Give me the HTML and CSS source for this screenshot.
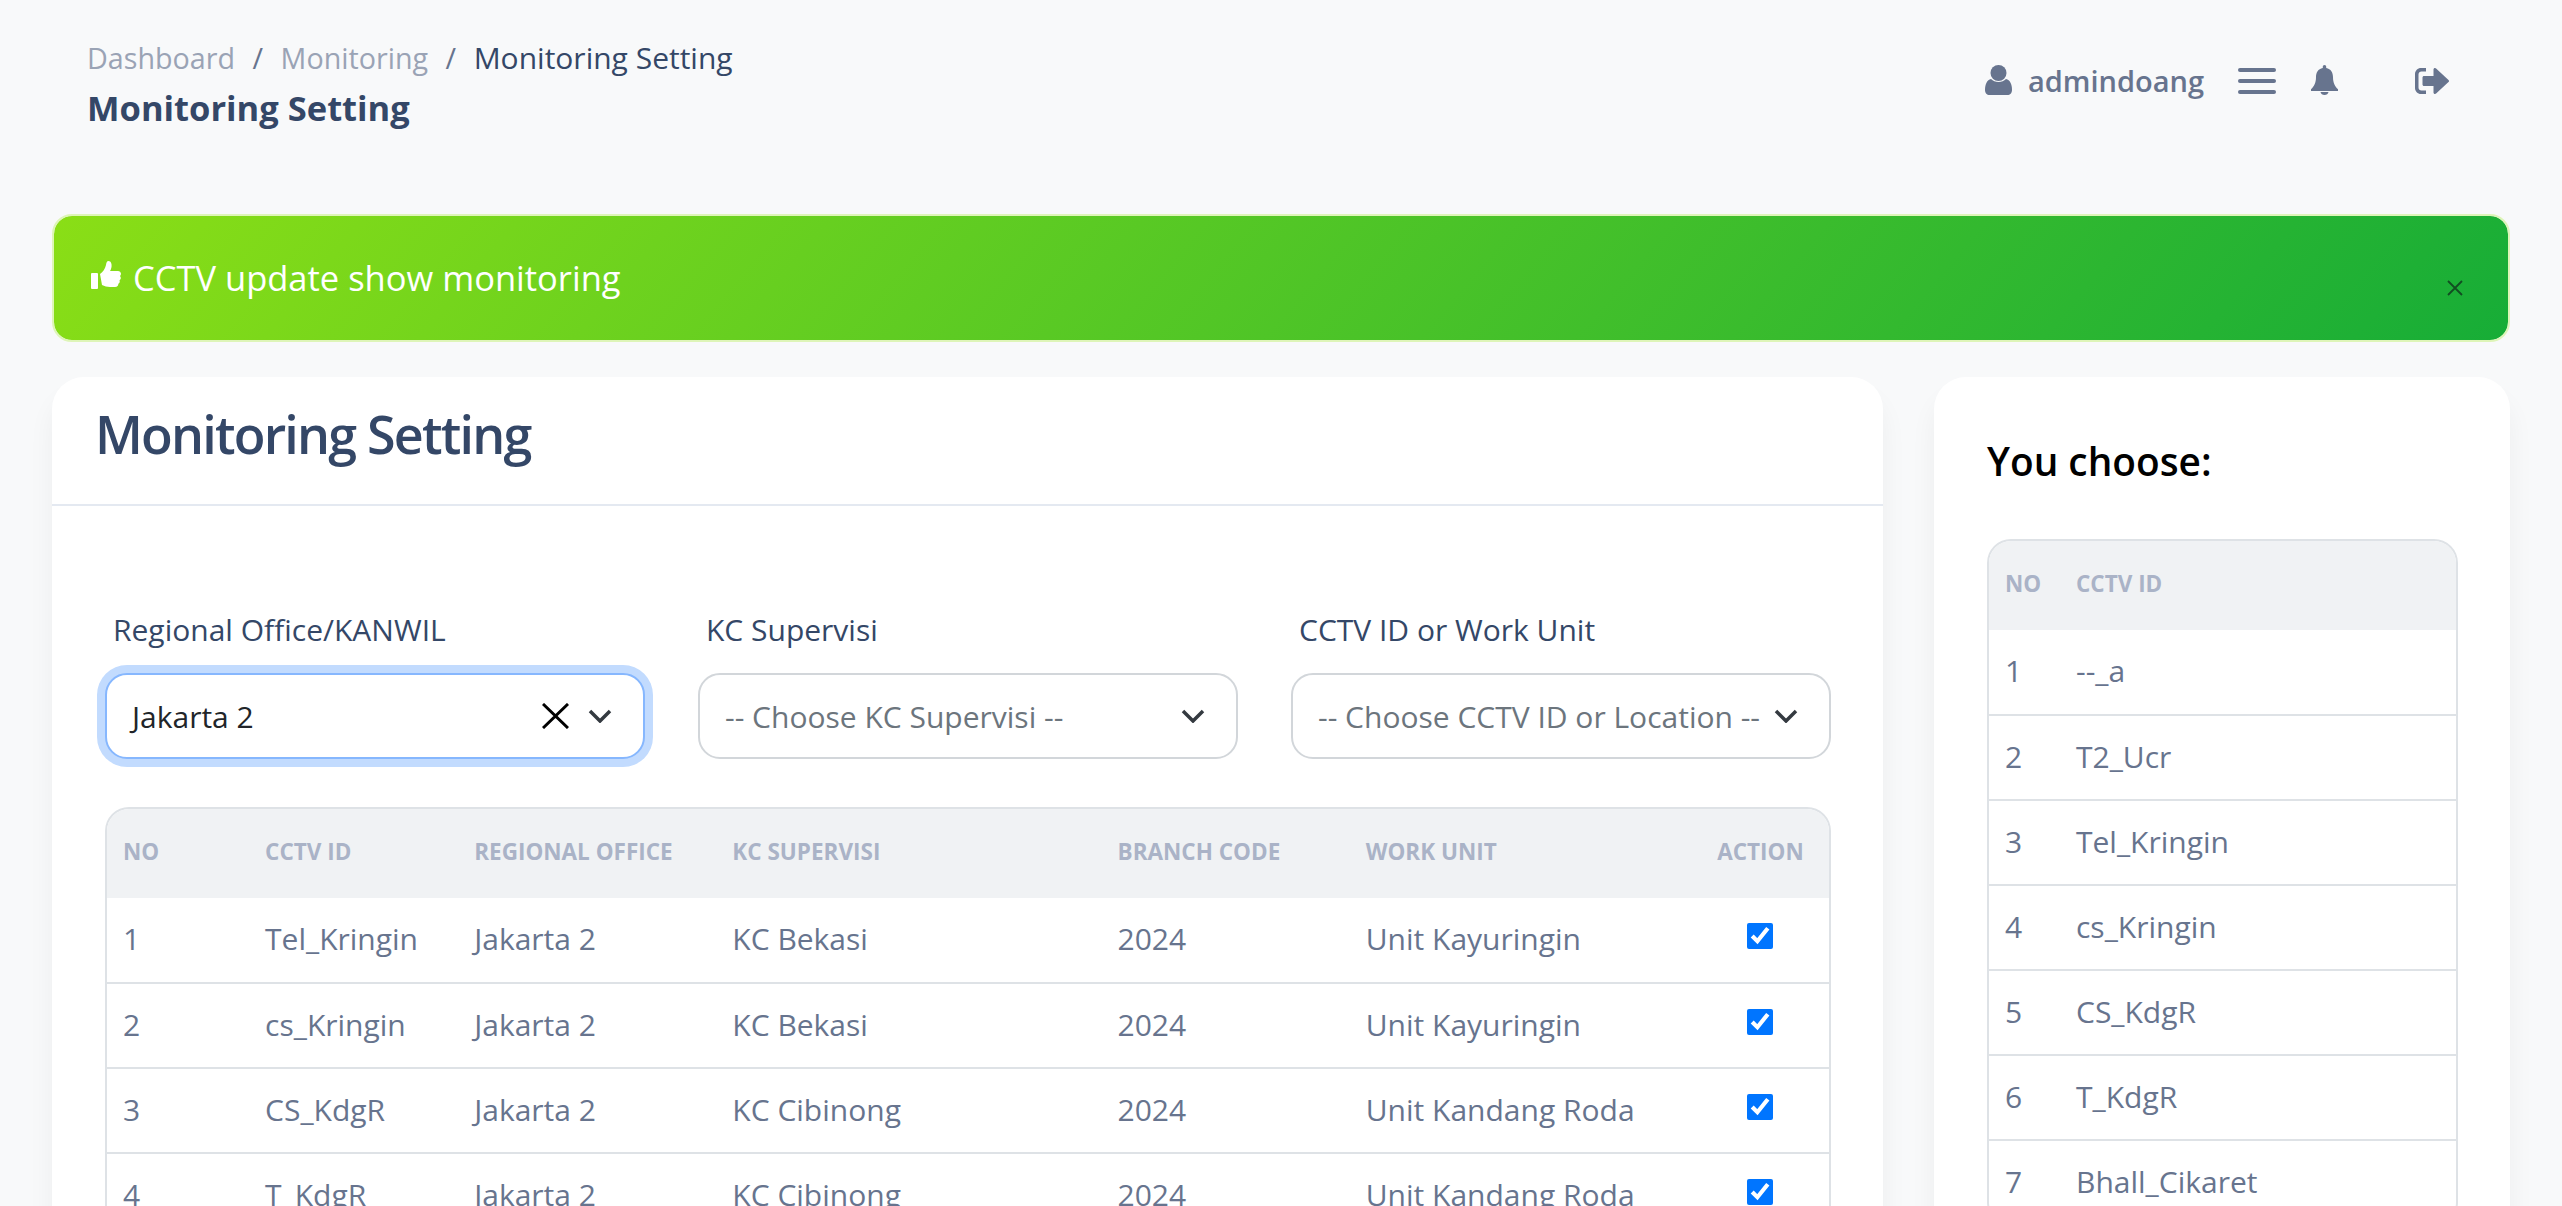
FILE: index.html
```html
<!DOCTYPE html>
<html lang="en">
<head>
<meta charset="utf-8">
<title>Monitoring Setting</title>
<link rel="stylesheet" href="styles.css">
</head>
<body>
<main class="page">
  <header class="topbar">
    <div class="crumbs-block">
      <nav class="crumbs">
        <span class="crumb-muted">Dashboard</span><span class="crumb-sep">/</span><span class="crumb-muted">Monitoring</span><span class="crumb-sep">/</span><span class="crumb-current">Monitoring Setting</span>
      </nav>
      <div class="page-title">Monitoring Setting</div>
    </div>
    <div class="top-actions">
      <svg class="ic ic-user" viewBox="0 0 27 30"><ellipse cx="13.5" cy="8" rx="8" ry="8"/><path d="M0 25c0-6 2-10 6-11 2 2 4.500 3 7.500 3s5.500-1 7.500-3c4 1 6 5 6 11 0 3-2 5-4.500 5h-18C2 30 0 28 0 25z"/></svg>
      <span class="user-name">admindoang</span>
      <svg class="ic ic-bars" viewBox="0 0 38 26"><rect width="38" height="4" rx="2"/><rect y="11" width="38" height="4" rx="2"/><rect y="22" width="38" height="4" rx="2"/></svg>
      <svg class="ic ic-bell" viewBox="0 0 27 30"><path d="M13.500 0c1 0 1.700.8 1.700 1.800v1.100C20 3.800 22 7.500 22 12c0 6 2 9.500 5 12.300V26H0v-1.700C3 21.500 5 18 5 12c0-4.500 2-8.200 6.800-9.100V1.800C11.800.8 12.500 0 13.500 0z"/><path d="M9.500 27h8c-.3 1.800-2 3-4 3s-3.700-1.200-4-3z"/></svg>
      <svg class="ic ic-out" viewBox="0 0 34 26"><path d="M11 0v3.500H6.500c-1.700 0-3 1.300-3 3v13c0 1.700 1.300 3 3 3H11V26H6C2.700 26 0 23.300 0 20V6c0-3.300 2.700-6 6-6z"/><path d="M20 0c.4 0 .8.200 1.100.5L33.500 11.900c.7.600.7 1.600 0 2.200L21.100 25.500c-.3.300-.7.500-1.100.500-.9 0-1.500-.7-1.500-1.500V18H9c-.8 0-1.500-.7-1.500-1.500v-7C7.500 8.700 8.200 8 9 8h9.500V1.500C18.500.7 19.100 0 20 0z"/></svg>
    </div>
  </header>

  <div class="alert">
    <svg class="ic-thumb" viewBox="0 0 30 29"><rect x="0" y="12" width="7" height="16" rx="1"/><path d="M9 13c3-2 5-5 6-9 .3-2 .8-4 2.500-4 2.500 0 3.500 3 3 6-.2 1.500-.8 3-1.500 4h8c1.500 0 3 1.200 3 2.800 0 1-.4 1.700-1 2.200.5.600.8 1.300.8 2 0 1-.5 1.800-1.300 2.300.2.500.3 1 .2 1.500-.1.900-.7 1.600-1.400 2 .2 2-1 3.200-3.300 3.200h-5c-3 0-5.500-1-8-2z"/></svg>
    <span class="alert-text">CCTV update show monitoring</span>
    <svg class="alert-close" viewBox="0 0 16 16"><path d="M1 1l14 14M15 1L1 15"/></svg>
  </div>

  <div class="columns">
    <section class="card">
      <div class="card-head"><h2 class="card-title">Monitoring Setting</h2></div>
      <div class="card-body">
        <div class="filters">
          <div class="field">
            <label class="field-label">Regional Office/KANWIL</label>
            <div class="select select-focus">
              <span class="select-value">Jakarta 2</span>
              <svg class="select-clear" viewBox="0 0 27 26"><path d="M1 1l25 24M26 1L1 25"/></svg>
              <svg class="chev" viewBox="0 0 24 14"><path d="M2 2l10 10L22 2"/></svg>
            </div>
          </div>
          <div class="field">
            <label class="field-label">KC Supervisi</label>
            <div class="select">
              <span class="select-placeholder">-- Choose KC Supervisi --</span>
              <svg class="chev" viewBox="0 0 24 14"><path d="M2 2l10 10L22 2"/></svg>
            </div>
          </div>
          <div class="field">
            <label class="field-label">CCTV ID or Work Unit</label>
            <div class="select">
              <span class="select-placeholder">-- Choose CCTV ID or Location --</span>
              <svg class="chev" viewBox="0 0 24 14"><path d="M2 2l10 10L22 2"/></svg>
            </div>
          </div>
        </div>
        <div class="table-wrap">
          <table class="grid-table main-table">
            <colgroup><col class="c1"><col class="c2"><col class="c3"><col class="c4"><col class="c5"><col class="c6"><col class="c7"></colgroup>
            <thead><tr><th>No</th><th>CCTV ID</th><th>Regional Office</th><th>KC Supervisi</th><th>Branch Code</th><th>Work Unit</th><th class="center">Action</th></tr></thead>
            <tbody>
              <tr><td>1</td><td>Tel_Kringin</td><td>Jakarta 2</td><td>KC Bekasi</td><td>2024</td><td>Unit Kayuringin</td><td class="center"><input class="check" type="checkbox" checked></td></tr>
              <tr><td>2</td><td>cs_Kringin</td><td>Jakarta 2</td><td>KC Bekasi</td><td>2024</td><td>Unit Kayuringin</td><td class="center"><input class="check" type="checkbox" checked></td></tr>
              <tr><td>3</td><td>CS_KdgR</td><td>Jakarta 2</td><td>KC Cibinong</td><td>2024</td><td>Unit Kandang Roda</td><td class="center"><input class="check" type="checkbox" checked></td></tr>
              <tr><td>4</td><td>T_KdgR</td><td>Jakarta 2</td><td>KC Cibinong</td><td>2024</td><td>Unit Kandang Roda</td><td class="center"><input class="check" type="checkbox" checked></td></tr>
            </tbody>
          </table>
        </div>
      </div>
    </section>

    <aside class="card side-card">
      <h3 class="side-title">You choose:</h3>
      <div class="table-wrap">
        <table class="grid-table side-table">
          <colgroup><col class="s1"><col class="s2"></colgroup>
          <thead><tr><th>No</th><th>CCTV ID</th></tr></thead>
          <tbody>
            <tr><td>1</td><td>--_a</td></tr>
            <tr><td>2</td><td>T2_Ucr</td></tr>
            <tr><td>3</td><td>Tel_Kringin</td></tr>
            <tr><td>4</td><td>cs_Kringin</td></tr>
            <tr><td>5</td><td>CS_KdgR</td></tr>
            <tr><td>6</td><td>T_KdgR</td></tr>
            <tr><td>7</td><td>Bhall_Cikaret</td></tr>
          </tbody>
        </table>
      </div>
    </aside>
  </div>
</main>
</body>
</html>
```
FILE: styles.css
```css
* { box-sizing: border-box; }
html, body { margin: 0; height: 100%; overflow: hidden; }
body {
  background: #f8f9fa;
  font-family: "Open Sans", "Noto Sans", sans-serif;
  color: #344767;
}
.page { padding: 0 52px; }

/* top bar */
.topbar {
  height: 214px;
  display: flex;
  justify-content: space-between;
  align-items: flex-start;
  padding: 38px 0 0 35px;
}
.crumbs { font-size: 30px; line-height: 40px; white-space: nowrap; }
.crumb-muted { color: #9aa3b5; font-size: 28.700px; }
.crumb-sep { color: #67748e; margin: 0 17.500px; font-size: 28.700px; }
.crumb-current { color: #344767; }
.page-title { font-size: 34.500px; font-weight: 700; line-height: 44px; margin-top: 8px; color: #344767; }
.top-actions {
  display: flex;
  align-items: center;
  height: 30px;
  margin-top: 27px;
  margin-right: 61px;
}
.ic { fill: #67748e; display: block; flex: none; }
.ic-user { width: 27px; height: 30px; }
.user-name { font-size: 29px; font-weight: 600; color: #67748e; margin: 2px 0 0 16px; line-height: 30px; }
.ic-bars { width: 38px; height: 26px; margin: 2px 0 0 34px; }
.ic-bell { width: 27px; height: 30px; margin-left: 35px; }
.ic-out { width: 34px; height: 26px; margin: 2px 0 0 77px; }

/* alert */
.alert {
  height: 128px;
  border: 2px solid #def5b8;
  border-radius: 20px;
  background: linear-gradient(310deg, #17ad37, #8ade16);
  background-clip: padding-box;
  display: flex;
  align-items: center;
  padding-left: 37px;
  position: relative;
  color: #fff;
}
.ic-thumb { width: 30px; height: 29px; fill: #fff; margin-top: -6px; flex: none; }
.alert-text { font-size: 34.500px; margin-left: 12px; line-height: 50px; }
.alert-close {
  position: absolute;
  right: 45px;
  top: 64px;
  width: 16px;
  height: 16px;
  stroke: #124d22;
  stroke-width: 1.800;
  fill: none;
}

/* layout */
.columns {
  display: grid;
  grid-template-columns: 1fr 576px;
  gap: 51px;
  margin-top: 35px;
  align-items: start;
}
.card {
  background: #fff;
  border-radius: 32px;
  box-shadow: 0 20px 27px rgba(0, 0, 0, .05);
}
.card-head { height: 129px; border-bottom: 2px solid #e4e9f1; padding: 0 0 14px 43px; display: flex; align-items: center; }
.card-title { margin: 0; font-size: 52px; font-weight: 600; letter-spacing: -1.800px; line-height: 72px; color: #344767; }
.card-body { padding: 104px 52px 60px 53px; }

/* filters */
.filters { display: grid; grid-template-columns: repeat(3, 1fr); gap: 53px; }
.field-label { display: block; font-size: 30px; line-height: 40px; padding-left: 8px; margin-bottom: 23px; color: #344767; }
.select {
  height: 86px;
  border: 2px solid #d2d6da;
  border-radius: 22px;
  background: #fff;
  display: flex;
  align-items: center;
  padding: 0 31px 0 25px;
}
.select-focus { border-color: #86b7fe; box-shadow: 0 0 0 8px #c2dbfe; }
.select-value { font-size: 30px; color: #212529; flex: 1; }
.select-placeholder { font-size: 30px; color: #6c757d; flex: 1; white-space: nowrap; }
.select-clear { width: 27px; height: 26px; stroke: #000; stroke-width: 3; fill: none; margin-right: 19px; flex: none; }
.chev { width: 24px; height: 14px; stroke: #343a40; stroke-width: 3.500; fill: none; flex: none; }

/* tables */
.table-wrap { margin-top: 48px; border: 2px solid #dee2e6; border-bottom: 0; border-radius: 24px; overflow: hidden; }
.grid-table { width: 100%; border-collapse: collapse; table-layout: fixed; }
.c1 { width: 142px; } .c2 { width: 209px; } .c3 { width: 258px; } .c4 { width: 385px; }
.c5 { width: 248px; } .c6 { width: 352px; } .c7 { width: 127px; }
.s1 { width: 71px; }
.grid-table th {
  height: 89px;
  background: #f0f2f4;
  text-align: left;
  text-transform: uppercase;
  font-size: 22.500px;
  font-weight: 700;
  color: #aab3c7;
  padding: 0 0 4px 16px;
}
.grid-table td {
  height: 85px;
  border-bottom: 2px solid #dee2e6;
  font-size: 30px;
  color: #67748e;
  padding: 0 0 3px 16px;
  white-space: nowrap;
}
.grid-table th.center, .grid-table td.center { text-align: center; padding-left: 0; padding-right: 10px; }
.grid-table td.center { line-height: 0; }
.check { width: 26px; height: 26px; margin: 0 0 5px; display: inline-block; vertical-align: middle; }

/* side card */
.side-card { padding: 0 52px 40px 53px; }
.side-title { margin: 0; padding-top: 61px; font-size: 38.800px; font-weight: 600; line-height: 46px; color: #000; }
.side-card .table-wrap { margin-top: 55px; }
.side-table th { height: 89px; }
```
